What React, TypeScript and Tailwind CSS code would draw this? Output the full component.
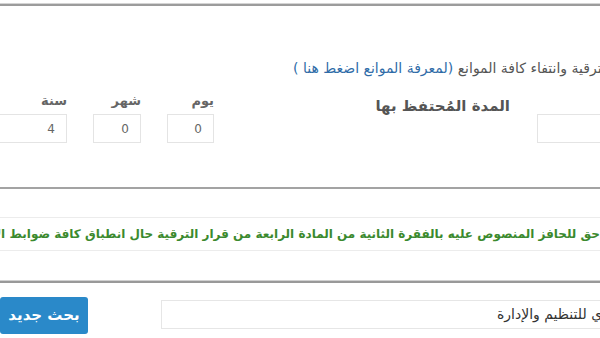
export default function App() {
  return (
    <div className="w-[600px] h-[338px] overflow-hidden bg-white font-['DejaVu_Sans',sans-serif]">
      {/* top rule */}
      <div className="pt-[3px]">
        <div className="h-[3px] border-t border-[#d4d4d4] bg-[#9c9c9c]" />
      </div>

      {/* conditions line */}
      <div className="mt-[54px] h-[16px] leading-[16px] whitespace-nowrap pl-[293px] text-[14px] text-[#555]">
        <span dir="rtl">
          يشترط استيفاء شروط الترقية وانتفاء كافة الموانع{' '}
          <span className="text-[#2f6ca8]">(لمعرفة الموانع اضغط هنا )</span>
        </span>
      </div>

      {/* retained period */}
      <div className="mt-[16px] flex">
        <div className="flex shrink-0 gap-[26px] ml-[-23px]">
          <Field label="سنة" value="4" width="w-[90px]" />
          <Field label="شهر" value="0" width="w-[48px]" />
          <Field label="يوم" value="0" width="w-[47px]" />
        </div>
        <div className="w-[323px] shrink-0 pt-[2px] pr-[27px] text-right">
          <span dir="rtl" className="text-[15px] leading-[20px] font-bold text-[#555]">
            المدة المُحتفظ بها
          </span>
        </div>
        <div className="flex shrink-0 flex-col">
          <div className="h-[18px]" />
          <div className="mt-[4px] h-[29px] w-[100px] border border-[#e4e4e4]" />
        </div>
      </div>

      <div className="mt-[44px] h-[2px] bg-[#a3a3a3]" />

      {/* note */}
      <div
        dir="rtl"
        className="mt-[28px] h-[34px] border-y border-[#ececec] whitespace-nowrap text-right text-[12px] leading-[32px] font-bold text-[#3b8a2e]"
      >
        حق للحافز المنصوص عليه بالفقرة الثانية من المادة الرابعة من قرار الترقية حال انطباق كافة ضوابط الإستحقاق
      </div>

      <div className="mt-[29px] h-[3px] border-t border-[#d0d0d0] bg-[#999]" />

      {/* bottom row */}
      <div className="mt-[14px] flex items-start">
        <button className="h-[37px] w-[88px] shrink-0 whitespace-nowrap rounded-[3px] bg-[#2a89c9] text-white text-[15px] font-bold">
          <span dir="rtl">بحث جديد</span>
        </button>
        <div className="ml-[73px] mt-[3px] flex h-[29px] w-[500px] shrink-0 items-center border border-[#e6e6e6] pl-[335px] whitespace-nowrap text-[14px] text-[#333]">
          <span dir="rtl">الجهاز المركزي للتنظيم والإدارة</span>
        </div>
      </div>
    </div>
  );
}

function Field({ label, value, width }: { label: string; value: string; width: string }) {
  return (
    <div className="flex flex-col">
      <div dir="rtl" className="h-[18px] leading-[18px] text-right text-[13px] font-bold text-[#666]">
        {label}
      </div>
      <div className={`mt-[4px] h-[29px] ${width} border border-[#e4e4e4] flex items-center justify-end pr-[11px] text-[12px] text-[#666]`}>
        {value}
      </div>
    </div>
  );
}
